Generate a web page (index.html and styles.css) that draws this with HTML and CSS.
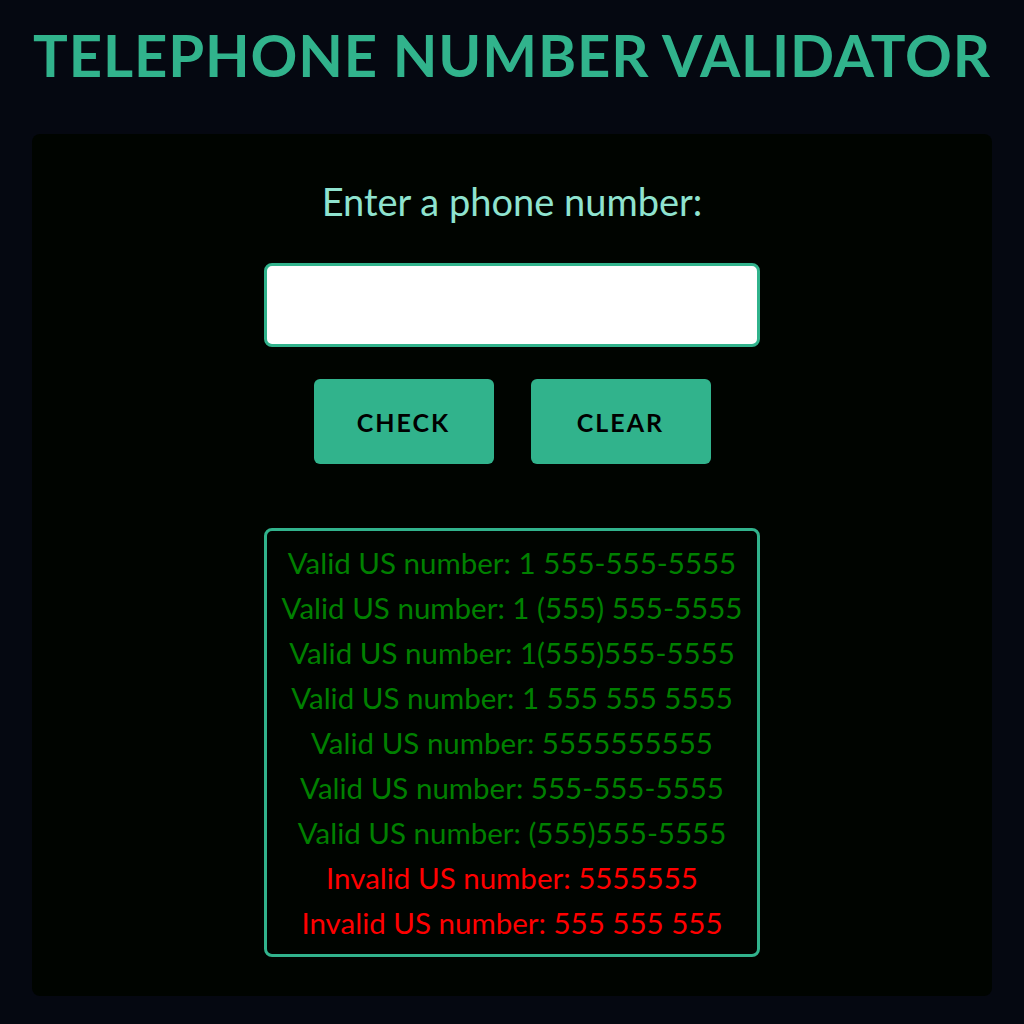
FILE: index.html
```html
<!DOCTYPE html>
<html lang="en">
<head>
<meta charset="utf-8">
<title>Telephone Number Validator</title>
<link rel="stylesheet" href="styles.css">
</head>
<body>
<h1 class="title">Telephone Number Validator</h1>
<main class="card">
  <label class="prompt" for="user-input">Enter a phone number:</label>
  <input id="user-input" class="field" type="text">
  <div class="actions">
    <button class="btn" type="button">Check</button>
    <button class="btn" type="button">Clear</button>
  </div>
  <div class="results">
    <p class="ok">Valid US number: 1 555-555-5555</p>
    <p class="ok">Valid US number: 1 (555) 555-5555</p>
    <p class="ok">Valid US number: 1(555)555-5555</p>
    <p class="ok">Valid US number: 1 555 555 5555</p>
    <p class="ok">Valid US number: 5555555555</p>
    <p class="ok">Valid US number: 555-555-5555</p>
    <p class="ok">Valid US number: (555)555-5555</p>
    <p class="bad">Invalid US number: 5555555</p>
    <p class="bad">Invalid US number: 555 555 555</p>
  </div>
</main>
</body>
</html>
```
FILE: styles.css
```css
* { box-sizing: border-box; }
html, body { margin: 0; padding: 0; }
body {
  background: #050811;
  font-family: Lato, "Open Sans", sans-serif;
  min-height: 1024px;
  padding-top: 26px;
}
.title {
  margin: 0;
  height: 108px;
  text-align: center;
  white-space: nowrap;
  color: #31b38c;
  font-family: Lato, sans-serif;
  font-weight: 700;
  font-size: 58px;
  line-height: 58px;
  letter-spacing: 0.85px;
  text-transform: uppercase;
}
.card {
  margin: 0 32px;
  background: #000400;
  border-radius: 8px;
  height: 862px;
  display: flex;
  flex-direction: column;
  align-items: center;
  padding-top: 44px;
}
.prompt {
  color: #8fe3cf;
  font-size: 38px;
  line-height: 46px;
}
.field {
  margin-top: 39px;
  width: 496px;
  height: 84px;
  border: 3px solid #31b38c;
  border-radius: 8px;
  background: #fff;
  font-size: 28px;
  padding: 0 12px;
}
.actions {
  margin-top: 32px;
  display: flex;
  gap: 37px;
}
.btn {
  width: 180px;
  height: 85px;
  border: none;
  border-radius: 6px;
  background: #31b38c;
  color: #000;
  font-family: Lato, sans-serif;
  font-weight: 700;
  font-size: 25px;
  letter-spacing: 2px;
  text-transform: uppercase;
  padding: 0;
}
.results {
  margin-top: 64px;
  width: 496px;
  border: 3px solid #31b38c;
  border-radius: 8px;
  padding: 9px 0 9px;
  text-align: center;
}
.results p {
  margin: 0;
  font-size: 29.5px;
  line-height: 45px;
}
.ok { color: #008000; }
.bad { color: #ff0000; }
```
